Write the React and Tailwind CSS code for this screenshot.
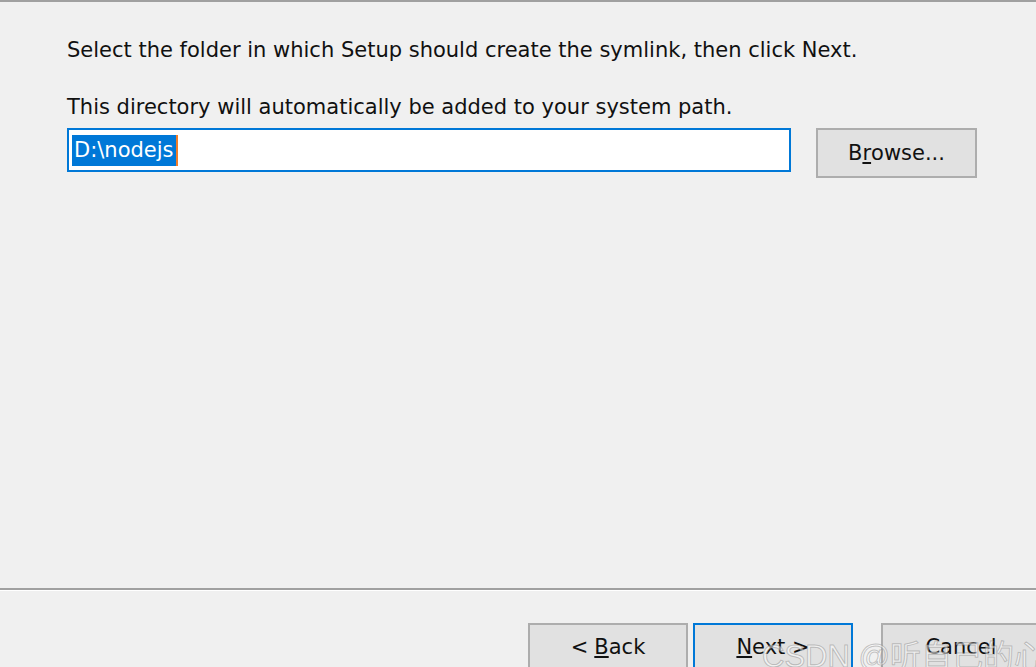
import React from 'react';

const FONT = { fontFamily: '"DejaVu Sans", Verdana, sans-serif' };

const Btn = ({ children, focused, className = '' }) => (
  <div
    className={`flex shrink-0 items-center justify-center h-[50px] w-[160px] bg-[#e1e1e1] text-[21px] text-[#111] ${
      focused ? 'border-2 border-[#0078d7]' : 'border-2 border-[#adadad]'
    } ${className}`}
  >
    {children}
  </div>
);

export default function App() {
  return (
    <div className="relative w-[1036px] h-[667px] overflow-hidden bg-[#f0f0f0] flex flex-col" style={FONT}>
      <div className="shrink-0 h-[2px] bg-[#a0a0a0]" />
      <div className="shrink-0 h-[586px] pl-[67px] pr-[59px] pt-[35px] text-[21px] text-[#111] leading-[26px]">
        <p>Select the folder in which Setup should create the symlink, then click Next.</p>
        <p className="mt-[31px]">This directory will automatically be added to your system path.</p>
        <div className="flex items-start mt-[8px]">
          <div className="w-[725px] h-[44px] border-2 border-[#0078d7] bg-white flex items-center pl-[3px]">
            <span className="bg-[#0078d7] text-white px-[2px] h-[31px] flex items-center border-r-2 border-[#f07d2a]">
              D:\nodejs
            </span>
          </div>
          <Btn className="ml-[25px] h-[49px] w-[161px]">
            B<span className="underline underline-offset-2">r</span>owse...
          </Btn>
        </div>
      </div>
      <div className="shrink-0 h-[2px] bg-[#a0a0a0]" />
      <div className="shrink-0 h-[1px] bg-white" />
      <div className="shrink-0 h-[32px]" />
      <div className="shrink-0 flex pl-[528px] gap-[5px]">
        <Btn>
          &lt; <span className="underline underline-offset-2 ml-[6px]">B</span>ack
        </Btn>
        <Btn focused>
          <span className="underline underline-offset-2">N</span>ext &gt;
        </Btn>
        <Btn className="ml-[23px]">Cancel</Btn>
      </div>
      <div
        className="absolute left-[762px] top-[634px] text-[31px] text-white/50 whitespace-nowrap"
        style={{ fontFamily: '"Liberation Sans", "Noto Sans CJK SC", sans-serif', WebkitTextStroke: '1px rgba(130,130,130,0.45)' }}
      >
        CSDN @听自己的心
      </div>
    </div>
  );
}
